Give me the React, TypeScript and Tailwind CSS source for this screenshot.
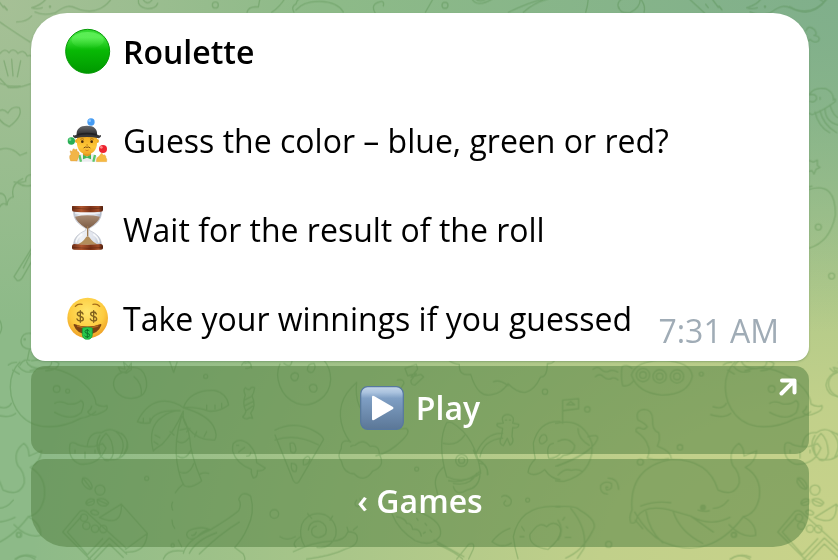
import type { ReactNode } from "react";

const font = "font-['Open_Sans','Noto_Sans',sans-serif]";

function GreenCircle() {
  return (
    <svg viewBox="24 27 144 144" className="size-12 shrink-0" aria-hidden="true">
      <defs>
        <linearGradient id="ball" x1="0" y1="0" x2="0" y2="1">
          <stop offset="0" stopColor="#2fd52c" />
          <stop offset="0.18" stopColor="#45e440" />
          <stop offset="0.48" stopColor="#08b905" />
          <stop offset="1" stopColor="#009800" />
        </linearGradient>
        <linearGradient id="shine" x1="0" y1="0" x2="0" y2="1">
          <stop offset="0" stopColor="#7bff74" stopOpacity="0.55" />
          <stop offset="1" stopColor="#7bff74" stopOpacity="0" />
        </linearGradient>
      </defs>
      <circle cx="98" cy="97" r="66" fill="url(#ball)" stroke="#069a06" strokeWidth="3" />
      <ellipse cx="98" cy="64" rx="48" ry="25" fill="url(#shine)" />
    </svg>
  );
}

function Juggler() {
  return (
    <svg viewBox="24 24 144 144" className="size-12 shrink-0" aria-hidden="true">
      <defs>
        <linearGradient id="hat" x1="0" y1="0" x2="0" y2="1">
          <stop offset="0" stopColor="#6a6a6c" />
          <stop offset="1" stopColor="#2b2b2d" />
        </linearGradient>
        <linearGradient id="face" x1="0" y1="0" x2="0" y2="1">
          <stop offset="0" stopColor="#f0a81c" />
          <stop offset="0.6" stopColor="#ffc93a" />
          <stop offset="1" stopColor="#f0a526" />
        </linearGradient>
      </defs>
      <path d="M62 158c0-14 10-21 22-23h26c12 2 21 9 21 23Z" fill="#ececf0" />
      <path d="M73 138l5 20M120 138l-5 20" stroke="#5cc76a" strokeWidth="7" />
      <path d="M84 126h24v12q-12 9-24 0Z" fill="#e29a20" />
      <circle cx="66" cy="96" r="6" fill="#efa923" />
      <circle cx="126" cy="96" r="6" fill="#efa923" />
      <path d="M66 80h60v22c0 20-13 34-30 34s-30-14-30-34Z" fill="url(#face)" />
      <path d="M76 91q6-4 11 0M105 91q6-4 11 0" stroke="#8a5310" strokeWidth="2" fill="none" />
      <circle cx="82" cy="98" r="4" fill="#4a2a0c" />
      <circle cx="110" cy="98" r="4" fill="#4a2a0c" />
      <path d="M94 108h5" stroke="#c47b12" strokeWidth="3" />
      <path d="M86 117q5-5 10-2q5-3 10 2" stroke="#7a4a12" strokeWidth="3" fill="none" />
      <path d="M91 123q5 4 10 0" stroke="#c25f1a" strokeWidth="2" fill="none" />
      <path d="M96 143l-12-6v14l12-5l12 5v-14Z" fill="#43b556" />
      <path d="M65 78c-2-18 10-28 31-28s32 10 30 28Z" fill="url(#hat)" />
      <path d="M54 78q6 3 13-2q29-8 58 0q7 5 13 2q2 6-6 10q-36-8-72 0q-8-4-6-10Z" fill="#38383a" />
      <path d="M67 75q29-8 58 0v5q-29-7-58 0Z" fill="#222224" />
      <circle cx="108" cy="39" r="11" fill="#469cf3" />
      <circle cx="104" cy="35" r="4" fill="#8cc6ff" />
      <circle cx="49" cy="96" r="11" fill="#29ae55" />
      <circle cx="45" cy="92" r="4" fill="#70d98e" />
      <circle cx="144" cy="120" r="12" fill="#ed2430" />
      <circle cx="139" cy="115" r="4" fill="#ff8b8b" />
      <path
        d="M47 156q-7-15 1-20l-3-9q3-5 6 2l3-9q5-3 6 4l3-4q5 0 3 7l4 1q5 4 1 15l-5 13Z"
        fill="#f2b548"
        stroke="#d99430"
        strokeWidth="1"
      />
      <path
        d="M124 158q0-13 8-16l7-9q4-1 5 6l4-2q6 3 5 9q4 3 2 12Z"
        fill="#f6b941"
        stroke="#e0a036"
        strokeWidth="1"
      />
    </svg>
  );
}

function Hourglass() {
  return (
    <svg viewBox="24 21 144 144" className="size-12 shrink-0" aria-hidden="true">
      <defs>
        <linearGradient id="wood" x1="0" y1="0" x2="1" y2="0">
          <stop offset="0" stopColor="#6b2c15" />
          <stop offset="0.3" stopColor="#b0572f" />
          <stop offset="0.6" stopColor="#7c3217" />
          <stop offset="0.85" stopColor="#9e4a26" />
          <stop offset="1" stopColor="#4e1d0c" />
        </linearGradient>
        <linearGradient id="glass" x1="0" y1="0" x2="1" y2="0">
          <stop offset="0" stopColor="#b9c0cb" />
          <stop offset="0.25" stopColor="#f0f2f6" />
          <stop offset="0.75" stopColor="#dfe3ec" />
          <stop offset="1" stopColor="#aab3c3" />
        </linearGradient>
        <linearGradient id="sand" x1="0" y1="0" x2="0" y2="1">
          <stop offset="0" stopColor="#a88a72" />
          <stop offset="1" stopColor="#7b5c45" />
        </linearGradient>
      </defs>
      <path
        d="M56 38h83c1 22-12 37-36 50v6c24 11 37 24 36 46H56c-1-22 12-35 36-46v-6C68 75 55 60 56 38Z"
        fill="url(#glass)"
        stroke="#b9bec8"
        strokeWidth="2"
      />
      <path d="M60 53q37-8 75 0q-5 17-31 33q-7 5-13 0Q64 69 60 53Z" fill="url(#sand)" />
      <path d="M98 82v30" stroke="#9c7a52" strokeWidth="4" />
      <path d="M66 137q17-6 27-22q5-6 10 0q11 16 26 22Z" fill="#b38d5a" />
      <path d="M63 131q2-17 19-25M132 131q-2-17-17-25" stroke="#fff" strokeWidth="5" fill="none" opacity="0.8" />
      <path d="M60 42h75" stroke="#fff" strokeWidth="4" opacity="0.8" />
      <path d="M51 23q0-3 5-3h83q5 0 5 3v10q0 5-6 5q-41 4-81 0q-6 0-6-5Z" fill="url(#wood)" />
      <path d="M51 27q46 7 93 0" stroke="#4c1d0d" strokeWidth="2" fill="none" opacity="0.6" />
      <path d="M51 141q0-5 6-6q40 5 81 0q6 1 6 6v7q0 4-6 4q-41 2-81 0q-6 0-6-4Z" fill="url(#wood)" />
      <path d="M51 145q46 6 93 0" stroke="#4c1d0d" strokeWidth="2" fill="none" opacity="0.6" />
    </svg>
  );
}

function MoneyFace() {
  return (
    <svg viewBox="24 18 144 144" className="size-12 shrink-0" aria-hidden="true">
      <defs>
        <radialGradient id="yellow" cx="0.48" cy="0.35" r="0.65">
          <stop offset="0" stopColor="#ffe66c" />
          <stop offset="0.65" stopColor="#fdcb3f" />
          <stop offset="1" stopColor="#ee9f26" />
        </radialGradient>
      </defs>
      <circle cx="98" cy="87" r="61" fill="url(#yellow)" />
      <path d="M61 52q8-9 20-6M114 46q12-3 20 6" stroke="#a66d19" strokeWidth="4" fill="none" strokeLinecap="round" />
      <g fill="none" stroke="#81611d" strokeWidth="4" strokeLinecap="round">
        <path id="dollar" d="M84 75q-2-6-8-6q-9 0-9 6q0 5 9 7q9 2 9 8q0 6-9 6q-8 0-10-6M76 65v35" />
        <use href="#dollar" x="40" />
      </g>
      <path d="M58 105q39 15 79 0q3 0 2 4q-10 27-41 27q-32 0-42-27q-1-4 2-4Z" fill="#7c4312" />
      <path d="M66 109q32 10 64 0v4q-32 9-64 0Z" fill="#b66b1e" />
      <path d="M82 117q15-5 30 0v20q-1 14-15 14t-15-14Z" fill="#27c64c" stroke="#119b38" strokeWidth="2" />
      <path
        d="M103 127q-2-4-6-4q-7 0-7 5q0 4 7 5q7 1 7 6q0 5-7 5q-6 0-8-4M97 120v27"
        fill="none"
        stroke="#0c752a"
        strokeWidth="3"
      />
    </svg>
  );
}

function PlayIcon() {
  return (
    <svg viewBox="0 0 44 44" className="size-11 shrink-0" aria-hidden="true">
      <defs>
        <linearGradient id="play" x1="0" y1="0" x2="0" y2="1">
          <stop offset="0" stopColor="#c5d6e9" />
          <stop offset="0.14" stopColor="#a9c2de" />
          <stop offset="0.27" stopColor="#7f9fc4" />
          <stop offset="1" stopColor="#5b7797" />
        </linearGradient>
      </defs>
      <rect x="0.7" y="0.7" width="42.6" height="42.6" rx="7" fill="url(#play)" stroke="#57789f" strokeWidth="1.2" />
      <path d="M12 11q0-2 2-1l19 11q1 1 0 2L14 34q-2 1-2-1Z" fill="#fff" />
    </svg>
  );
}

/* Line drawings behind the chat. One tile is 2145 units wide and repeats sideways. */
function Wallpaper() {
  return (
    <svg
      viewBox="0 0 2514 1680"
      preserveAspectRatio="xMidYMid slice"
      className="absolute inset-0 size-full"
      aria-hidden="true"
    >
      <g fill="none" stroke="#43803a" strokeWidth="4" strokeLinecap="round" strokeLinejoin="round" opacity="0.29">
        <g id="tile">
          {/* top and left edge */}
          <path d="M-40-45L10 22M12 18l8 10M0 66q25 18 90 60M50 66q30 0 45-18M140-5q-18 22-45 28q15 6 32 0M105 36q25 12 60 3c40-30 50-20 75-10q35 10 62-4q22-12 34-32" />
          <path d="M0 160q15-18 27-2q12-17 27 2q18-14 28 8q16-6 16 14M12 182l12 46M35 178l4 50M62 182l-10 48M0 236l25 26q30 4 65-10M0 250q30 12 60 8" />
          <path d="M28 380q-38-17-34-43q12-16 30 2q12-22 34-16q12 25-30 57ZM0 448q34-10 60 18l20-8M42 546q20 4 35-2q-2-18 16-20" />
          <path d="M0 620q6-14 22-6q0-20 18-23q-10-38 28-55M0 580q22 2 18 35M52 548q20 14 42 8M42 830L98 740M42 830l10 12q10 2 18-14l38-66M92 760l-22 44" />
          <path d="M92 1000q-24-3-29 20q-2 26 29 28M0 962q10 20 0 38" />
          <circle cx="74" cy="1018" r="2" />
          <path d="M418-10q-12 30 25 36q25 0 30-16M428-4q15 25 30 0M780-5l-5 26q-30-3-34 16M855-5q-16 26-40 42M882 37q-10-18 6-25q4-22 28-16M888 30c30-36 118-34 142 6M1150 18q4-18-12-12q-28 8-12 34" />
          <circle cx="646" cy="15" r="9" />
          <path d="M1300-5l-24 42M1415-5q15 30 62 2M1425-4q15 14 35 0M1525 37q60-30 102-38M1570 37q30-28 74-40M1765-5q-2 24-8 42M1856 20q4 22 34 18q34-16 30-44M1870-5q-22 10-14 30M1920-5q18 20 12 42M2066-5l48 44M2117 13l8 10M2158 20l8 10" />
          <circle cx="1335" cy="16" r="9" />
          <circle cx="150" cy="20" r="2" />

          <g transform="translate(0 1050)">
            {/* dolphin ball */}
            <path d="M60 36C20 75 22 150 62 195c45 50 125 40 180 10q25-4 45-20M90 62q65-24 140 22q55 40 58 78q15 10 33 5q5 14-20 22q-28 14-38-4q10-5 12-17M164 160q15-10 40 2q25 2 38-10q15 4 2 35q-30 28-80 0M34 160q-10 20-40 10M47 190q-22 16-60 4" />
            <path d="M25 45q10-10 25-8M60 45q10-20 30-14M95 32q60-10 82 8q-2 20-40 22M55 48q20 26 50 15M80 35q5 20 45 20q30-2 30-18M82 30l6-30M38 60l20 12" />
            <circle cx="170" cy="117" r="10" />
            <circle cx="203" cy="123" r="6" />
            {/* peach */}
            <path d="M378 65C340 68 332 104 350 126c20 24 60 24 80 6c20-26 8-82-32-80q-15 2-20 13ZM402 80q25 20 22 55M355 52l20 5l-4-20l15 14l8-12v20l-15 10l-18-5Z" />
            {/* pumpkin and slice */}
            <path d="M262 286q6-42 42-38q22-16 42-5q40 12 37 50q-15 45-70 34M300 256q-20 30 5 66M318 250q-40 40-4 80q20 6 26-20q-2-45-22-60ZM346 243q40 34 12 80M365 250q28 22 8 60M210 282q-8 45 30 60q56 6 78-48l-10-13l-25 8q-40 4-58-10q-10-4-15 3ZM225 300v8M255 306v18M285 300v8" />
            {/* palm */}
            <path d="M412 215q30-62 82-62q30 0 56 20q20-54 92-52q38 8 44 44q-30 22-60 18q-42-14-76-10q70 20 90 55q14 28 4 42q-50 2-80-36q-18-22-14-51q-28 64-64 100q-25 16-26 20q-18-70 24-101q30-22 56-20q-80-4-90 36q-18 4-38-3ZM430 205v12M450 205v12M465 255l15 8M462 275l12 8M510 245l12 10M570 235l-10 10M590 245l-6 15M620 245l-8 15M620 165v15M645 165v12M665 160v12" />
            <path d="M545 197q-24 80-14 140q8 50 22 70q22 10 52-14q-34-80-36-130q-8-46-24-66ZM540 240l25-6M532 274q20 12 36-12M533 318q22 16 40-18M537 365q30 14 44-24M600 372q12-6 26-2M550 402q-15 12-24 26M518 456q-6 10 0 24M516 510q0 15 8 25M535 570l10 20" />
            {/* candy */}
            <path d="M736 135q-8-16 0-22q8 8 14 4q4-8 14-4q-2 16-8 24q14 32-4 52l6 16q-8-4-14 0q-8 4-16-4q8-8 10-18q-12-20-2-48ZM733 150l20-10M732 168l28-14M738 182l20-14" />
            {/* fish */}
            <path d="M700 280q20-20 48 4q22 24 22 54l26 16q-8 10-24 8q2 20-12 22q-8-12-6-26q-44-16-56-54q-2-14 2-24ZM716 306l18-14M710 286h6M740 318q10 2 12-10" />
            {/* chips box */}
            <path d="M240 484l-52 62l90 90M244 500l-42 46l60 68l46-48M240 484q14-8 28 10l110 100M300 502l64-40l78 88l-66 48M364 462q4 72-66 40M442 550q-4 60-64 56M262 632l66-68l52 48M280 632l48-50l42 40" />
            <circle cx="252" cy="503" r="11" />
            <circle cx="259" cy="527" r="11" />
            <circle cx="285" cy="536" r="11" />
            <circle cx="310" cy="537" r="11" />
            <circle cx="300" cy="420" r="15" />
            <path d="M248 384q12-4 24 14q10 18-2 20q-16-4-24-22ZM250 386l22 28M258 456q8-14 24-8q6 18-16 18q-10-2-8-10ZM260 460l20-8M292 448q20-8 34 10q-4 14-24 8q-12-6-10-18ZM294 450l28 12M272 484q10-10 24 4q0 8-14 6q-10-4-10-10Z" />
            {/* banana */}
            <path d="M550 610q10-40 80-70q60-36 86-58q10-20 0-34q10-28 36-10q14 50-10 96q-14 34-38 58l26 20q6 10 4 20M568 610q20-40 82-62M598 612q60-60 120-96M562 560q-8-14 14-22q30-10 52 0q-20 4-36 22q-22 14-30 0ZM575 556q10 2 14-10M490 627q10-30 60-24" />
            <circle cx="440" cy="385" r="6" />
            <circle cx="617" cy="79" r="6" />
            <circle cx="518" cy="586" r="5" />
            <circle cx="823" cy="492" r="13" />
            <circle cx="56" cy="555" r="6" />
            <path d="M495-5l26 72l10-30M725 45q12-20 24-8q12 18-12 18M735 40q20-8 20 14M45 627q30-20 60 0M-5 475q25 0 45-25" />
          </g>

          <g transform="translate(840 1050)">
            {/* cookie, pizza */}
            <path d="M0 42C-18 80 0 140 50 160c50 16 100-20 102-72q0-34-22-60M36 88q-10-14 8-20q18 2 8 20q-8 8-16 0ZM82 60q0-20 20-20q8 14-4 26q-10 4-16-6ZM88 110q8-12 20-4q8 14-4 20q-16 2-16-16ZM12 40q20 16 24-6M-15 240q60-30 120 4q22 12 26 24L56 396q-8 8-16-4L-15 255M-15 270q60-22 130 14M30 280q16-8 18 20q-4 14-16 4ZM70 330q14-20 20-4q-4 20-20 18ZM34 340q22 0 14 24q-16 4-14-24Z" />
            {/* moon and cloud */}
            <path d="M230 97q-70 60-40 142q8 20 20 36M230 97q-10 80 50 120q40 26 98 18q16 8-10 34q-40 40-80 48M212 275q-30-10-28 20q-14 24 0 38q8 38 38 38q30 30 56-8q40-14 20-50q0-30-28-24q-20-26-44-4q-10 0-14 4M375 55l34-12l4 14l-20 24l30-8l8 8l-26 24q-14 0-12-14l16-20l-26 6ZM352 90q20-4 20 10l-14 22M230 450q-12 16 4 20q14-10 6-24" />
            {/* clouds */}
            <path d="M486-5q10 44 52 48q-2 36 34 30q22 74 66 60q28-4 46-32q60 60 98-20q20 0 20-40q24 2 30-30M640 95q20-8 44 12" />
            {/* rocket */}
            <path d="M500 218q-30 60 0 162q52 24 102-10q-14-110-86-152q-8-4-16 0ZM490 280q40 10 64-24M506 392q54 10 96-30M520 400q50 10 70-30M492 350q-36 30-22 70q4 24 14 34M520 410q10 30 40 10q36-6 40-44M600 340q24 0 22 34M590 306q30-60 78-56M600 320q10-50 68-56M580 300l10 25q34 20 34 48" />
            <circle cx="545" cy="331" r="18" />
            <circle cx="545" cy="331" r="9" />
            <path d="M668 235q-22-6-16-14l18-2q-10-24 14-26q22 4 14 26l18 4q2 12-18 10l-2 26q8 18-6 26l-8-20l-12 22q-16-6-6-26ZM676 210h4M688 210h4" />
            {/* snail */}
            <path d="M75 590q-20-30-10-66q20-44 70-30q40 22 32 64q-16 40-56 34M62 560q-30 20-14 32M85 540q4-30 34-26q26 10 18 38q-22 20-40 2q-8-22 12-26M40 605q60-30 114-32q40 0 50-28q20 0 26 10q10 30-34 42q-40 20-116 30M205 545l-4-14M220 540l12-10M0 560q20 14 46 0M95 505l-12-14M150 510l8-12" />
            {/* ice cream */}
            <path d="M336 492q20 50 70 80q50 20 74-14q10-34-36-60q-22-12-58-20M350 500q26 4 30 20q14-2 18 18q22-4 26 20M435 520l5 6M450 540l5 6M430 550l6-4M410 505l4 6M472 582q60 28 76 45M462 570l90 50M530 627l36-44q20-8 14 14l-14 30" />
            {/* ghost and strawberry */}
            <path d="M840 215q-62-4-80 64q0 22 6 48q-20 20-22 40q20 16 50-8q20 28 46 30M785 256q16-8 16 14q-12 14-20 10q-8-12 4-24ZM820 280q-24 4-14 44q16 4 34-12M840 470q-120-10-140 90q4 34 14 66M690 535q-30 10-54 40q30 22 58 4M760 540q20-26 40-10q20-20 38-2q16 30-34 70q-60-10-54-46ZM725 530l8 12M720 560h12M665 440q14-10 28 8q4 20-14 20q-14-6-2-16" />
            <circle cx="795" cy="125" r="8" />
            <circle cx="410" cy="357" r="6" />
            <circle cx="743" cy="450" r="6" />
          </g>

          <g transform="translate(1674 1050)">
            {/* submarine */}
            <path d="M220 75q14-44 95-44q84 4 88 48q-12 56-92 56q-72-6-91-60ZM222 55q-20-16-30-4q-4 30 2 56q18 4 32-14M105 58q14-12 24 0q14 12 26 4q12-4 24 4M112 80q14-12 24 0q14 12 26 4q10-2 18 6" />
            <circle cx="255" cy="75" r="20" />
            <circle cx="255" cy="75" r="10" />
            <circle cx="305" cy="79" r="20" />
            <circle cx="305" cy="79" r="10" />
            <circle cx="357" cy="79" r="20" />
            <circle cx="357" cy="79" r="10" />
            {/* planet with flag */}
            <path d="M14 220v-70l48-4v30l-48 6M26 164l12-10l12 10ZM-6 220q80-20 108 60q6 90-84 114q-14 0-24-2M90 260q34-10 28 8q-20 44-120 80M102 290q-30 30-108 58M60 236q0 30 34 50M0 274q30-16 50 12q0 26-34 30q-10 12-18 10M0 375q20-22 40-14q20-6 34 4" />
            {/* seaweed */}
            <path d="M240 210q-10-28 18-32q24 0 26 30q-2 34 18 40q6 20-4 40q42 16 42 38M240 210q22 10 28 20q-10 12-20 4q-16-4-14 10q30 20 36 44q8 12-2 36q30 8 64 2" />
            {/* big whale */}
            <path d="M222 480q-10-130 120-152q110 0 138 92q50 22 64-22q2-30-20-52q-16-40 18-66q16 10 16 38q14-6 38-16q-4 36-34 50q50 30 42 90q-10 50-48 58q-50 66-110 86q-60 20-130-10q-50-26-86-90M222 480q-10 20-4 38q16 6 20-18q22-36 90-22l70 20q60 34 118 4M264 484q10 60 50 94M346 486q20 60 88 94M398 498l68 48M248 468q40-16 90-10M232 510l22 26M555 500q40 20 38 56q-40 10-80-32M420 480q18 6 34 2" />
            <circle cx="435" cy="472" r="7" fill="#43803a" />
            <path d="M150 412q-10-6-4 8q20-2 14-20q-20-10-32 6q-4 24 20 26M150 384q30 0 32 34M-5 470q60-4 70 10q60 34 38 64q-30 60-80 80M38 475q50 60 40 120l-20 30M0 510q20 30 0 60M14 510l6-8M25 530l4 4M22 562h16" />
            <circle cx="88" cy="178" r="8" />
            <circle cx="366" cy="292" r="8" />
            <circle cx="430" cy="72" r="6" />
            <circle cx="247" cy="336" r="9" />
            <circle cx="152" cy="583" r="9" />
            <circle cx="528" cy="554" r="8" />
            <path d="M520 627q26-20 58-6" />
          </g>
        </g>
        <use href="#tile" x="2145" />
        <use href="#tile" x="-2145" />
        {/* right edge */}
        <g transform="translate(2370 0)">
          <path d="M0 20q60 40 110-22M85-5l15 10M48 92q8-20 26-2q10 14-2 16q20 2 14 16q-14 10-26-4q-8 10-12 2M58 284q12-24 50-18q24 12 22 34q8-8 6 4q-30 24-70 40l-8-4M60 284q20-4 20 12q-6 14-20 8M75 336q10 44 44 62M90 332q10 44 50 66M105 325q0 40 40 50M120 315q10 36 30 40M90 292v6M58 482l12 4l12-6v16l8 6l-12 6l-6 14l-6-10l-10 2M58 568q80-24 78 78q-16 80-78 98M58 560l8-2" />
          <circle cx="85" cy="681" r="9" />
          <circle cx="125" cy="828" r="9" />
          <path d="M142 1115q-30 10-34 40q4 30 34 34M120 1105l10 10l12-6" />
        </g>
      </g>
    </svg>
  );
}

function Line({ icon, children }: { icon: ReactNode; children: ReactNode }) {
  return (
    <div className="flex h-11 items-center gap-3">
      {icon}
      {children}
    </div>
  );
}

export default function App() {
  return (
    <main
      className={`${font} relative min-h-screen overflow-hidden bg-[#8dba88] bg-[radial-gradient(circle_at_0%_0%,#a6c096_0%,transparent_32%),radial-gradient(ellipse_at_100%_0%,#80af8b_0%,transparent_42%),radial-gradient(ellipse_at_100%_100%,#c9d38a_0%,#c1d08a_20%,transparent_68%)] pt-[13px] pr-[29px] pb-[13px] pl-[31px] text-[32px] leading-11 text-black`}
    >
      <Wallpaper />

      <div className="relative flex flex-col gap-[5px]">
        {/* Message */}
        <article className="flex flex-col gap-[45px] rounded-t-[36px] rounded-b-[14px] bg-white pt-[17px] pr-[30px] pb-2 pl-8 shadow-[0_1px_2px_rgba(60,100,60,0.35)]">
          <Line icon={<GreenCircle />}>
            <h1 className="font-semibold">Roulette</h1>
          </Line>
          <Line icon={<Juggler />}>
            <p>Guess the color – blue, green or red?</p>
          </Line>
          <Line icon={<Hourglass />}>
            <p>Wait for the result of the roll</p>
          </Line>
          <div className="flex items-start justify-between">
            <Line icon={<MoneyFace />}>
              <p>Take your winnings if you guessed</p>
            </Line>
            <time className="mt-3 whitespace-nowrap text-[#a0acb6]">7:31 AM</time>
          </div>
        </article>

        {/* Inline keyboard */}
        <button
          type="button"
          className="relative flex h-22 w-full items-center justify-center gap-3 rounded-[14px] bg-[#538042]/53 pb-1 font-semibold text-white"
        >
          <PlayIcon />
          Play
          <svg viewBox="0 0 18 18" className="absolute top-3 right-3 size-[18px]" aria-hidden="true">
            <path
              d="M3 2.5h12.500v12M15 3L2.500 15.500"
              fill="none"
              stroke="#fff"
              strokeWidth="4"
              strokeLinecap="round"
              strokeLinejoin="round"
            />
          </svg>
        </button>
        <button
          type="button"
          className="flex h-22 w-full items-center justify-center rounded-t-[14px] rounded-b-[36px] bg-[#538042]/53 pb-1 font-semibold text-white"
        >
          ‹ Games
        </button>
      </div>
    </main>
  );
}
